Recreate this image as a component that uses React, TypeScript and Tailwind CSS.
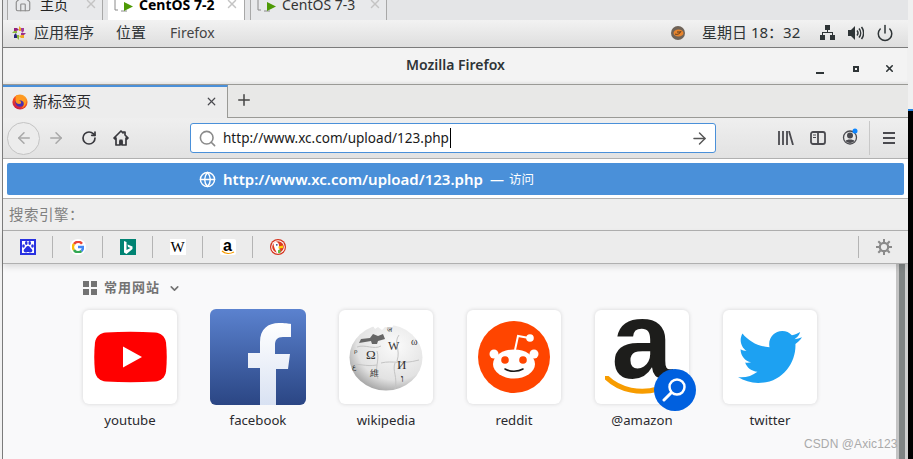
import { Home, X, Plus, Search, ArrowLeft, ArrowRight, RotateCw, Power, Globe, ChevronDown } from 'lucide-react';
import { FaTwitter } from 'react-icons/fa';

const sans = 'font-["Noto_Sans","Noto_Sans_CJK_SC",sans-serif]';

function VmIcon() {
  return (
    <svg width="20" height="20" viewBox="0 0 20 20" className="shrink-0">
      <path d="M4 5H1v11h3M5 2h7v4M7 17h6" fill="none" stroke="#8a8a8a" strokeWidth="1" />
      <path d="M10 8l9 4.500-9 4.500z" fill="#4e9a06" />
    </svg>
  );
}

function TopTab({ label, active }: { label: string; active?: boolean }) {
  return (
    <div className={`flex h-[20px] w-[137px] overflow-hidden ${active ? 'bg-white border-r border-r-[#a8a8a8]' : 'bg-[#e8e9eb] border-x border-[#a8a8a8]'}`}>
      <div className="flex h-[32px] w-full -mt-[12px] items-center pl-[6px] text-[14px]">
        <VmIcon />
        <span className={`ml-[5px] w-[85px] whitespace-nowrap ${active ? 'font-bold text-black' : 'text-[#333]'}`}>{label}</span>
        <X size={14} className="ml-[1px] text-[#c4c4c4]" strokeWidth={2.500} />
      </div>
    </div>
  );
}

function CentosLogo() {
  return (
    <svg width="14" height="14" viewBox="0 0 14 14" className="shrink-0">
      <path d="M7 0l2 2v3H7z" fill="#efa724" />
      <path d="M14 7l-2 2H9V7z" fill="#9c2f8a" />
      <path d="M7 14l-2-2V9h2z" fill="#8ab83c" />
      <path d="M0 7l2-2h3v2z" fill="#8ab83c" />
      <path d="M2 2h3l2 2-3 1-2 0z" fill="#932279" />
      <path d="M12 2v3l-2 2-1-3V2z" fill="#a33d9a" />
      <path d="M12 12H9l-2-2 3-1h2z" fill="#efa724" />
      <path d="M2 12V9l2-2 1 3v2z" fill="#262577" />
    </svg>
  );
}

function FirefoxLogo() {
  return (
    <svg width="16" height="16" viewBox="0 0 16 16" className="shrink-0">
      <defs>
        <linearGradient id="ff" x1="0.8" y1="0" x2="0.2" y2="1">
          <stop offset="0" stopColor="#ffbd2e" />
          <stop offset="0.5" stopColor="#f5461f" />
          <stop offset="1" stopColor="#c4154f" />
        </linearGradient>
      </defs>
      <circle cx="8" cy="8" r="7.600" fill="url(#ff)" />
      <circle cx="8" cy="8.200" r="4.600" fill="#4a2fb0" />
      <path d="M4 1.500c3-1 8 0 10 5 .6 3-1 7-5 8 3-1.500 3.500-5 2-7-1-1-3-1.500-4-.7 1.500 0 2.500 1 2 2.500-1 1-4 1-5-1C3 6 4 3.500 4 1.500z" fill="#ff9a1f" />
    </svg>
  );
}

function NetworkIcon() {
  return (
    <svg width="15" height="15" viewBox="0 0 15 15" className="shrink-0" fill="#2e3436">
      <rect x="5" y="0" width="5" height="5" />
      <rect x="0" y="10" width="5" height="5" />
      <rect x="10" y="10" width="5" height="5" />
      <path d="M7 5h1v2h5v3h-1V8H3v2H2V7h5z" />
    </svg>
  );
}

function VolumeIcon() {
  return (
    <svg width="16" height="14" viewBox="0 0 16 14" className="shrink-0">
      <path d="M0 4h3l4-4v14l-4-4H0z" fill="#2e3436" />
      <path d="M9 4.500a4 4 0 0 1 0 5M11 2.500a7 7 0 0 1 0 9M13.500 1a9.500 9.500 0 0 1 0 12" fill="none" stroke="#2e3436" strokeWidth="1.500" />
    </svg>
  );
}

function TrayIcon() {
  return (
    <svg width="14" height="14" viewBox="0 0 14 14" className="shrink-0">
      <circle cx="7" cy="7" r="7" fill="#6f6358" />
      <ellipse cx="7.500" cy="7" rx="5" ry="3.600" fill="#e8842c" />
      <path d="M4 8c2 1 5 0 6-3M6 6h3" fill="none" stroke="#5b3a1c" strokeWidth="1" />
    </svg>
  );
}

function LibraryIcon() {
  return (
    <svg width="16" height="14" viewBox="0 0 16 14" className="shrink-0" fill="none" stroke="#4a4a4f" strokeWidth="1.800">
      <path d="M1 0v14M5 0v14M9 0v14M11 0l4 14" />
    </svg>
  );
}

function SidebarIcon() {
  return (
    <svg width="16" height="14" viewBox="0 0 16 14" className="shrink-0" fill="none" stroke="#4a4a4f" strokeWidth="1.800">
      <rect x="1" y="1" width="14" height="12" rx="2" />
      <path d="M8 1v12" />
      <path d="M3 4h3M3 6.500h3" strokeWidth="1" />
    </svg>
  );
}

function AccountIcon() {
  return (
    <svg width="17" height="17" viewBox="0 0 17 17" className="shrink-0">
      <circle cx="8" cy="9.500" r="6.500" fill="none" stroke="#4a4a4f" strokeWidth="1.300" />
      <circle cx="8" cy="7.500" r="3" fill="#4a4a4f" />
      <path d="M3.500 13c1-2 8-2 9 0-2 2.500-7 2.500-9 0z" fill="#4a4a4f" />
      <circle cx="13" cy="3" r="2.500" fill="#0a84ff" />
    </svg>
  );
}

function MenuIcon() {
  return (
    <svg width="12" height="12" viewBox="0 0 12 12" className="shrink-0" fill="#4a4a4f">
      <rect y="0" width="12" height="2" />
      <rect y="5" width="12" height="2" />
      <rect y="10" width="12" height="2" />
    </svg>
  );
}

function HomeFilled() {
  return (
    <svg width="16" height="16" viewBox="0 0 16 16" className="shrink-0">
      <path d="M8 1L1 8l1 1 1-1v7h4v-4h2v4h4V8l1 1 1-1-3-3V2h-2v1z" fill="none" stroke="#38383d" strokeWidth="1.700" strokeLinejoin="round" />
      <rect x="6.500" y="9.500" width="3" height="5.500" fill="#38383d" />
    </svg>
  );
}

function GearIcon() {
  return (
    <svg width="16" height="16" viewBox="0 0 16 16" fill="none" stroke="#8a8a8a">
      <circle cx="8" cy="8" r="4.200" strokeWidth="2.200" />
      <path d="M8 0v3M8 13v3M0 8h3M13 8h3M2.300 2.300l2.200 2.200M11.500 11.500l2.200 2.200M13.700 2.300l-2.200 2.200M4.500 11.500l-2.200 2.200" strokeWidth="2" />
    </svg>
  );
}

function BaiduIcon() {
  return (
    <div className="flex h-[16px] w-[16px] items-center justify-center border-2 border-[#2932e1] bg-white">
      <svg width="12" height="12" viewBox="0 0 12 12" fill="#2932e1">
        <ellipse cx="1.500" cy="5" rx="1.300" ry="1.700" />
        <ellipse cx="4.300" cy="2" rx="1.300" ry="1.900" />
        <ellipse cx="7.700" cy="2" rx="1.300" ry="1.900" />
        <ellipse cx="10.500" cy="5" rx="1.300" ry="1.700" />
        <path d="M6 5c2 0 2 2 4 3.500 1 1.500 0 3-2 3-1 0-1-.5-2-.5s-1 .5-2 .5c-2 0-3-1.500-2-3C4 7 4 5 6 5z" />
      </svg>
    </div>
  );
}

function GoogleIcon() {
  return (
    <div className="flex h-[16px] w-[16px] items-center justify-center rounded-full bg-white">
      <svg width="12" height="12" viewBox="0 0 24 24" fill="none" strokeWidth="5">
        <path d="M20 5.500A10 10 0 0 0 4 6" stroke="#ea4335" />
        <path d="M4 6a10 10 0 0 0 0 12" stroke="#fbbc05" />
        <path d="M4 18a10 10 0 0 0 15 2" stroke="#34a853" />
        <path d="M19 20a10 10 0 0 0 3-8H12" stroke="#4285f4" />
      </svg>
    </div>
  );
}

function BingIcon() {
  return (
    <div className="flex h-[16px] w-[16px] items-center justify-center bg-[#008373]">
      <svg width="10" height="13" viewBox="0 0 10 13" fill="white">
        <path d="M1 0l2.500 1v8l4-2L5 6 4.500 3.500 9.500 5.500v2.500L3.500 13 1 11.500z" />
      </svg>
    </div>
  );
}

function SmallAmazon() {
  return (
    <div className="relative flex h-[16px] w-[16px] justify-center overflow-hidden rounded-[2px] bg-white">
      <span className='font-["Liberation_Sans",sans-serif] text-[16px] leading-[14px] font-bold text-black'>a</span>
      <svg width="14" height="5" viewBox="0 0 14 5" className="absolute bottom-0 left-[1px]">
        <path d="M1 1c3 3 8 3 12 1" fill="none" stroke="#f79c00" strokeWidth="1.300" />
      </svg>
    </div>
  );
}

function DuckIcon() {
  return (
    <svg width="16" height="16" viewBox="0 0 16 16">
      <circle cx="8" cy="8" r="8" fill="#d5311c" />
      <circle cx="8" cy="8" r="6.800" fill="white" />
      <circle cx="8" cy="8" r="5.800" fill="#de3a1f" />
      <path d="M3.500 4c3-2 5.500-.5 5.500 2.500 0 2 1 5 1 7.500H7C5.500 11 3.500 8 3.500 4z" fill="white" />
      <circle cx="6.800" cy="5.800" r=".9" fill="#2d4f8e" />
      <path d="M8.500 7.500l4.500-1v2.500l-4.500.5z" fill="#fdd20a" />
      <path d="M8 11l2.500-.5V14H8z" fill="#65bc46" />
    </svg>
  );
}

function YoutubeLogo() {
  return (
    <svg width="73" height="52" viewBox="0 0 73 52">
      <path d="M12 1.500C28 .5 45 .5 61 1.500c6 .5 10 4 11 10 1 9 1 20 0 29-1 6-5 9.500-11 10-16 1-33 1-49 0-6-.5-10-4-11-10-1-9-1-20 0-29 1-6 5-9.500 11-10z" fill="#ff0000" />
      <path d="M29 15.500v21l19-10.500z" fill="white" />
    </svg>
  );
}

function FacebookLogo() {
  return (
    <div className="h-[96px] w-[96px] shrink-0 overflow-hidden rounded-[6px] bg-gradient-to-b from-[#5b82cf] to-[#2b4684]">
      <svg width="96" height="96" viewBox="0 0 96 96">
        <defs>
          <linearGradient id="fbf" x1="0" y1="0" x2="0" y2="1">
            <stop offset="0" stopColor="#ffffff" />
            <stop offset="1" stopColor="#d8e1f2" />
          </linearGradient>
        </defs>
        <path d="M50 96V59H38V44h12V33c0-13 8-19 19-19 5 0 10 .5 12 1v13h-8c-6 0-8 3-8 8v9h15l-2 15H66v37z" fill="url(#fbf)" />
      </svg>
    </div>
  );
}

function WikipediaLogo() {
  return (
    <svg width="74" height="68" viewBox="0 0 74 68">
      <defs>
        <radialGradient id="wk" cx="0.62" cy="0.32" r="0.8">
          <stop offset="0" stopColor="#fbfbfb" />
          <stop offset="0.65" stopColor="#e2e2e2" />
          <stop offset="1" stopColor="#8d8d8d" />
        </radialGradient>
      </defs>
      <ellipse cx="37" cy="34.500" rx="36.500" ry="33" fill="url(#wk)" />
      <path d="M22 0h24l-4 6-6-2-3 3-4-3-3 2z" fill="white" />
      <path d="M12 16l9-1 3-4 5 2 5-2 2 5-7 2-1 3h-5l-1-3-12 2z" fill="#666" />
      <path d="M8 24c8-3 17 3 24-1M28 28c3 10-3 16 1 28M32 40c12-3 20 2 38-3M50 12c-6 8 2 14-2 26M46 40c-3 8 3 14 0 26M4 42c6-2 12 2 24 0" fill="none" stroke="#c4c4c4" strokeWidth="1" />
      <g fill="#333" fontFamily="Liberation Serif, serif">
        <text x="17" y="36" fontSize="13">Ω</text>
        <text x="39" y="27" fontSize="12">W</text>
        <text x="48" y="46" fontSize="13">И</text>
        <text x="21" y="53" fontSize="9">維</text>
        <text x="52" y="59" fontSize="10" fontWeight="bold">ו</text>
        <text x="62" y="22" fontSize="10">ω</text>
        <text x="5" y="30" fontSize="7">ρ</text>
        <text x="3" y="46" fontSize="7">ع</text>
        <text x="38" y="9" fontSize="7">ज</text>
      </g>
    </svg>
  );
}

function RedditLogo() {
  return (
    <svg width="72" height="72" viewBox="0 0 72 72">
      <circle cx="36" cy="36" r="36" fill="#ff4500" />
      <ellipse cx="36" cy="43" rx="21" ry="14.500" fill="white" />
      <circle cx="16" cy="33" r="4.500" fill="white" />
      <circle cx="56" cy="33" r="4.500" fill="white" />
      <path d="M37 29l3-14 11 2" fill="none" stroke="white" strokeWidth="2" />
      <circle cx="52" cy="17" r="3.800" fill="white" />
      <circle cx="27" cy="39" r="3.800" fill="#ff4500" />
      <circle cx="45" cy="39" r="3.800" fill="#ff4500" />
      <path d="M27 48c5 3 13 3 18 0" fill="none" stroke="#1a1a1a" strokeWidth="1.500" strokeLinecap="round" />
    </svg>
  );
}

function AmazonLogo() {
  return (
    <>
      <div className="flex h-[94px] w-[94px] justify-center overflow-hidden rounded-[6px] bg-white shadow-[0_0_4px_rgba(0,0,0,0.15)]">
        <span className='-mt-[26px] font-["Liberation_Sans",sans-serif] text-[110px] leading-[112px] font-bold text-[#1d1d1b]'>a</span>
      </div>
      <svg width="60" height="24" viewBox="0 0 60 24" className="absolute left-[10px] top-[66px]">
        <path d="M1 1c14 14 35 17 52 12" fill="none" stroke="#f79c00" strokeWidth="5" strokeLinecap="round" />
      </svg>
      <div className="absolute left-[59px] top-[59px] flex h-[42px] w-[42px] items-center justify-center rounded-full bg-[#0060df]">
        <svg width="26" height="26" viewBox="0 0 26 26" fill="none" stroke="white">
          <circle cx="15" cy="10" r="7.500" strokeWidth="2.500" />
          <path d="M9 16l-7 7" strokeWidth="3" strokeLinecap="round" />
        </svg>
      </div>
    </>
  );
}

function Tile({ label, logo, bare, amazon }: { label: string; logo?: React.ReactNode; bare?: boolean; amazon?: boolean }) {
  return (
    <div className="flex w-[94px] flex-col items-center">
      <div className="relative flex h-[94px] w-[94px] items-center justify-center">
        {amazon ? (
          <AmazonLogo />
        ) : bare ? (
          logo
        ) : (
          <div className="flex h-[94px] w-[94px] items-center justify-center rounded-[6px] bg-white shadow-[0_0_4px_rgba(0,0,0,0.15)]">{logo}</div>
        )}
      </div>
      <span className="mt-[6px] text-[13.200px] leading-[20px] whitespace-nowrap text-[#2a2a2e]">{label}</span>
    </div>
  );
}

export default function App() {
  return (
    <div className={`relative flex h-[459px] w-[913px] overflow-hidden bg-white ${sans}`}>
      <div className="w-[2px] shrink-0 bg-[#f2f2f2]" />

      <div className="flex w-[906px] shrink-0 flex-col border-l border-[#7b7b7b]">
        {/* vm tabs */}
        <div className="flex h-[20px] shrink-0 bg-[#e4e5e7] pl-[4px]">
          <div className="flex h-[20px] w-[96px] overflow-hidden border-x border-[#a8a8a8] bg-[#e8e9eb]">
            <div className="flex h-[32px] w-full -mt-[12px] items-center pl-[6px] text-[14px] text-[#222]">
              <Home size={18} className="text-[#8a8a8a]" strokeWidth={1.500} />
              <span className="ml-[8px] w-[44px]">主页</span>
              <X size={14} className="text-[#c4c4c4]" strokeWidth={2.500} />
            </div>
          </div>
          <div className="ml-[5px]">
            <TopTab label="CentOS 7-2" active />
          </div>
          <div className="ml-[5px]">
            <TopTab label="CentOS 7-3" />
          </div>
        </div>

        {/* gnome panel */}
        <div className="flex h-[28px] shrink-0 items-center border-b border-[#7b7b7b] bg-gradient-to-b from-[#f2f2f2] to-[#dedede] pb-[2px] pl-[9px] text-[14px] text-[#2e3436]">
          <CentosLogo />
          <span className="ml-[8px] text-[15px]">应用程序</span>
          <span className="ml-[22px] text-[15px]">位置</span>
          <span className="ml-[24px] text-[#444]">Firefox</span>
          <div className="ml-auto flex items-center pr-[14px]">
            <TrayIcon />
            <span className="ml-[17px] w-[98px] text-[15px] whitespace-nowrap">星期日 18：32</span>
            <span className="ml-[20px]"><NetworkIcon /></span>
            <span className="ml-[13px]"><VolumeIcon /></span>
            <Power size={18} strokeWidth={2} className="ml-[12px] text-[#2e3436]" />
          </div>
        </div>

        {/* title bar */}
        <div className="relative flex h-[37px] shrink-0 items-center justify-center border-b border-[#9a9a96] bg-[#f3f3f3] pb-[3px] shadow-[inset_0_-2px_2px_rgba(0,0,0,0.05)]">
          <span className="text-[14px] font-semibold text-[#2e3436]">Mozilla Firefox</span>
          <div className="absolute right-[13px] top-[15px] flex items-center">
            <span className="mt-[8px] h-[2px] w-[8px] bg-[#2e3436]" />
            <span className="ml-[29px] h-[6px] w-[6px] border-2 border-[#2e3436]" />
            <X size={11} strokeWidth={3.500} className="ml-[25px] text-[#2e3436]" />
          </div>
        </div>

        {/* browser tabs */}
        <div className="flex h-[33px] shrink-0 border-b border-[#9a9a96] bg-[#e8e8e7]">
          <div className="-mb-px flex h-[33px] w-[225px] items-center border-t-2 border-r border-t-[#4a90d9] border-r-[#9a9a96] bg-[#ededed] pb-[2px] pl-[9px]">
            <FirefoxLogo />
            <span className="ml-[5px] w-[172px] text-[14.500px] text-[#2a2a2e]">新标签页</span>
            <X size={13} strokeWidth={2.200} className="text-[#4a4a4f]" />
          </div>
          <Plus size={18} strokeWidth={2} className="mt-[6px] ml-[7px] text-[#444]" />
        </div>

        {/* nav */}
        <div className="flex h-[41px] shrink-0 items-center border-b border-[#b0b0b0] bg-gradient-to-b from-[#efefef] to-[#e2e2e2] pl-[4px]">
          <div className="flex h-[33px] w-[33px] items-center justify-center rounded-full border border-[#c4c4c4] bg-[#ececec]">
            <ArrowLeft size={18} strokeWidth={2} className="text-[#a8a8a8]" />
          </div>
          <ArrowRight size={18} strokeWidth={2} className="ml-[7px] text-[#a8a8a8]" />
          <RotateCw size={16} strokeWidth={2.500} className="ml-[16px] text-[#38383d]" />
          <span className="ml-[16px]"><HomeFilled /></span>
          <div className="ml-[61px] flex h-[30px] w-[526px] items-center rounded-[3px] border border-[#4a90d9] bg-white pl-[7px] pr-[6px]">
            <Search size={19} strokeWidth={2} className="text-[#8a8a8a]" />
            <span className="ml-[6px] border-r border-black pr-px text-[13.550px] leading-[20px] text-[#1a1a1a]">http://www.xc.com/upload/123.php</span>
            <ArrowRight size={19} strokeWidth={1.800} className="ml-auto text-[#555]" />
          </div>
          <span className="ml-[62px]"><LibraryIcon /></span>
          <span className="ml-[16px]"><SidebarIcon /></span>
          <span className="-mt-[4px] ml-[16px]"><AccountIcon /></span>
          <span className="ml-[10px] h-[34px] w-px bg-[#c8c8c8]" />
          <span className="ml-[13px]"><MenuIcon /></span>
        </div>

        {/* url suggestion */}
        <div className="flex h-[40px] shrink-0 items-center border-b border-[#b0b0b0] bg-white px-[4px]">
          <div className="flex h-[32px] w-[897px] items-center rounded-[2px] bg-[#4a90d9] pt-[1px] pl-[192px] text-white">
            <Globe size={17} strokeWidth={2} />
            <span className="ml-[7px] text-[15px] font-semibold">http://www.xc.com/upload/123.php</span>
            <span className="ml-[7px] text-[14px]">—</span>
            <span className="mt-[3px] ml-[5px] text-[12.500px]">访问</span>
          </div>
        </div>

        {/* engines */}
        <div className="flex h-[32px] shrink-0 items-center border-b border-[#b0b0b0] bg-[#eeeeee] pl-[6px] text-[14.500px] tracking-[0.500px] text-[#808080]">
          搜索引擎：
        </div>
        <div className="relative z-10 flex h-[33px] shrink-0 items-center border-b border-[#b0b0b0] bg-[#ececec] shadow-[0_3px_6px_rgba(0,0,0,0.12)]">
          {[<BaiduIcon />, <GoogleIcon />, <BingIcon />, <span className='flex h-[16px] w-[16px] items-center justify-center bg-white font-["Liberation_Serif",serif] text-[15px] text-black'>W</span>, <SmallAmazon />, <DuckIcon />].map((icon, i) => (
            <div key={i} className={`flex h-[22px] w-[50px] items-center justify-center ${i < 5 ? 'border-r border-[#b4b4b4]' : ''}`}>
              {icon}
            </div>
          ))}
          <div className="ml-auto flex h-[22px] w-[50px] items-center justify-center border-l border-[#b4b4b4]">
            <GearIcon />
          </div>
        </div>

        {/* new tab content */}
        <div className="flex min-h-0 flex-1">
          <div className="flex-1 bg-[#f9f9fa] pt-[16px] pl-[80px]">
            <div className="flex h-[16px] items-center text-[13px] font-bold text-[#737373]">
              <svg width="14" height="14" viewBox="0 0 14 14" fill="#737373">
                <rect width="6" height="6" />
                <rect x="8" width="6" height="6" />
                <rect y="8" width="6" height="6" />
                <rect x="8" y="8" width="6" height="6" />
              </svg>
              <span className="ml-[7px] tracking-[1px]">常用网站</span>
              <ChevronDown size={13} strokeWidth={3} className="ml-[8px]" />
            </div>
            <div className="mt-[14px] flex gap-[34px]">
              <Tile label="youtube" logo={<YoutubeLogo />} />
              <Tile label="facebook" logo={<FacebookLogo />} bare />
              <Tile label="wikipedia" logo={<WikipediaLogo />} />
              <Tile label="reddit" logo={<RedditLogo />} />
              <Tile label="@amazon" amazon />
              <Tile label="twitter" logo={<FaTwitter size={64} className="text-[#1da1f2]" />} />
            </div>
          </div>
          <div className="flex w-[12px] shrink-0">
            <div className="w-[3px] bg-[#c4c4c4]" />
            <div className="w-[6px] bg-[#7f8484]" />
            <div className="w-[3px] bg-[#cfcfcf]" />
          </div>
        </div>
      </div>

      {/* desktop edge */}
      <div className="flex flex-1 flex-col">
        <div className="h-[109px] bg-[#f0f0f0]" />
        <div className="h-[2px] bg-[#2a84e0]" />
        <div className="flex-1 bg-black" />
      </div>

      <span className='absolute left-[804px] top-[436px] font-["Liberation_Sans",sans-serif] text-[12px] leading-[16px] tracking-[0.100px] text-[#aaaaaa]'>CSDN @Axic123</span>
    </div>
  );
}
